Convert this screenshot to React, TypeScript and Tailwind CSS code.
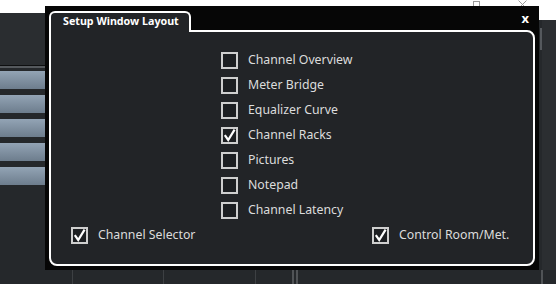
import React from "react";

const options = [
  { label: "Channel Overview", checked: false },
  { label: "Meter Bridge", checked: false },
  { label: "Equalizer Curve", checked: false },
  { label: "Channel Racks", checked: true },
  { label: "Pictures", checked: false },
  { label: "Notepad", checked: false },
  { label: "Channel Latency", checked: false },
];

function Box({ checked }: { checked: boolean }) {
  return (
    <span className="w-[17px] h-[17px] border-2 border-[#cfcfcf] bg-[#1d1f22] flex items-center justify-center shrink-0">
      {checked && (
        <svg width="13" height="13" viewBox="0 0 13 13">
          <path d="M1.8 6.2 L5.2 11 L11.6 0.6" stroke="#ffffff" strokeWidth="2.2" fill="none" />
        </svg>
      )}
    </span>
  );
}

function Option({ label, checked }: { label: string; checked: boolean }) {
  return (
    <div className="flex items-center gap-[10px] h-[17px]">
      <Box checked={checked} />
      <span className="text-[12.3px] text-[#dcdcdc] whitespace-nowrap">{label}</span>
    </div>
  );
}

export default function App() {
  return (
    <div className="relative w-[556px] h-[284px] overflow-hidden bg-[#25282b] font-['Noto_Sans',sans-serif]">
      {/* app behind the dialog */}
      <div className="flex flex-col h-full">
        <div className="h-[13px] bg-white flex items-start">
          <div className="w-[473px]" />
          <svg width="8" height="8" viewBox="0 0 8 8">
            <rect x="0.5" y="1.5" width="6" height="6" stroke="#9a9a9a" fill="none" />
          </svg>
          <div className="w-[37px]" />
          <svg width="9" height="9" viewBox="0 0 9 9">
            <path d="M0.5 0.5 L8.5 8.5 M8.5 0.5 L0.5 8.5" stroke="#9a9a9a" />
          </svg>
        </div>
        <div className="flex flex-1">
          <div className="w-[45px] flex flex-col">
            <div className="h-[52px] bg-[#2a2d30]" />
            <div className="h-[1px] bg-[#0e0f10]" />
            <div className="h-[2px] bg-[#55595d]" />
            <div className="flex flex-col gap-[6px] mt-[3px]">
              {[0, 1, 2, 3, 4].map((i) => (
                <div key={i} className="h-[18px] bg-gradient-to-b from-[#93a4b5] to-[#6d7d8d]" />
              ))}
            </div>
          </div>
          <div className="flex-1" />
          <div className="w-[17px] flex flex-col">
            <div className="h-[7px] bg-white" />
            <div className="flex flex-1">
              <div className="w-[1px]" />
              <div className="w-[2px] mt-[8px] h-[22px] bg-[#55595d]" />
              <div className="flex-1 bg-[#2b2e31]" />
            </div>
          </div>
        </div>
        <div className="h-[14px] flex">
          <div className="w-[72px]" />
          <div className="w-[1px] bg-[#3d4043]" />
          <div className="w-[90px]" />
          <div className="w-[1px] bg-[#3d4043]" />
          <div className="w-[91px]" />
          <div className="w-[1px] bg-[#3d4043]" />
          <div className="w-[36px]" />
          <div className="w-[2px] bg-[#505356]" />
          <div className="w-[2px]" />
          <div className="w-[2px] bg-[#505356]" />
          <div className="w-[243px]" />
          <div className="w-[2px] bg-[#505356]" />
        </div>
      </div>

      {/* dialog */}
      <div className="absolute left-[45px] top-[6px] w-[494px] h-[264px] bg-[#060606] px-[4px] pt-[5px] pb-[4px] flex flex-col">
        <div className="flex items-start">
          <div className="relative z-10 -mb-[2px] h-[21px] w-[142px] border-2 border-b-0 border-white rounded-t-[6px] bg-[#222427] flex items-center pl-[12px] pb-[2px]">
            <span className="text-[10.7px] font-bold text-white whitespace-nowrap">Setup Window Layout</span>
          </div>
          <span className="ml-auto mr-[6px] mt-[1px] text-[13px] font-bold text-white leading-none">x</span>
        </div>
        <div className="flex-1 border-2 border-white rounded-b-[8px] rounded-tr-[8px] bg-[#222427] pt-[20px] pl-[20px] flex flex-col gap-[8px]">
          <div className="flex flex-col gap-[8px] pl-[150px]">
            {options.map((o) => (
              <Option key={o.label} label={o.label} checked={o.checked} />
            ))}
          </div>
          <div className="flex">
            <div className="w-[301px]">
              <Option label="Channel Selector" checked={true} />
            </div>
            <Option label="Control Room/Met." checked={true} />
          </div>
        </div>
      </div>
    </div>
  );
}
